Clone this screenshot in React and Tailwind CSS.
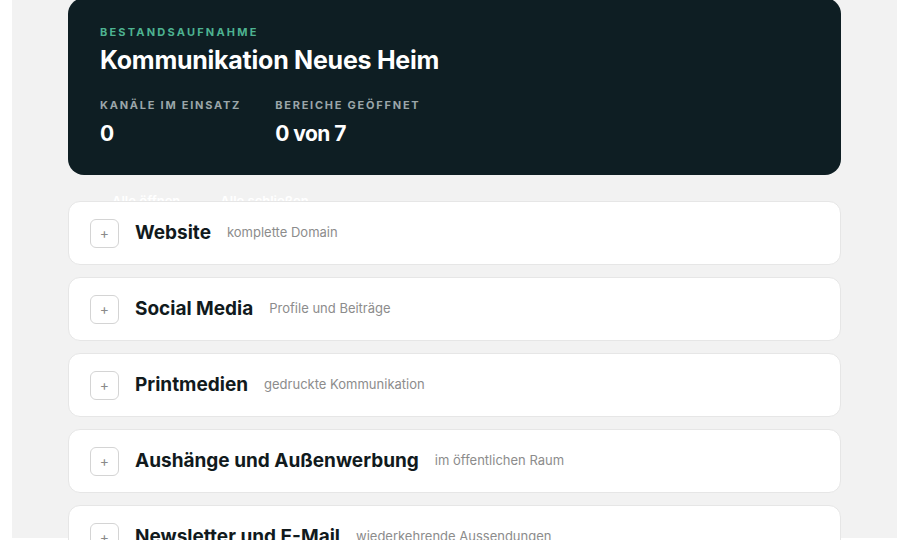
import React from 'react';

const bereiche = [
  { titel: 'Website', info: 'komplette Domain' },
  { titel: 'Social Media', info: 'Profile und Beiträge' },
  { titel: 'Printmedien', info: 'gedruckte Kommunikation' },
  { titel: 'Aushänge und Außenwerbung', info: 'im öffentlichen Raum' },
  { titel: 'Newsletter und E-Mail', info: 'wiederkehrende Aussendungen' },
  { titel: 'Veranstaltungen', info: 'Auftritte vor Ort' },
  { titel: 'Presse', info: 'Medienarbeit' },
];

export default function App() {
  return (
    <div className="h-[540px] overflow-hidden bg-white px-3" style={{ fontFamily: 'Inter, "Noto Sans", sans-serif' }}>
      <div className="h-full bg-[#f2f2f2] px-14 -mt-[2px]">
        <div className="rounded-2xl bg-[#0e1e23] px-8 pt-[29px] pb-[28px]">
          <p className="text-[11px] font-bold tracking-[0.2em] text-[#4db391] leading-none">BESTANDSAUFNAHME</p>
          <h1 className="mt-[7px] text-[25px] font-bold tracking-[-0.01em] text-white leading-[30px]">Kommunikation Neues Heim</h1>
          <div className="mt-[25px] flex gap-[34px]">
            <div>
              <p className="text-[11px] font-bold tracking-[0.16em] text-[#9ba6a9] leading-none">KANÄLE IM EINSATZ</p>
              <p className="mt-[10px] text-[21px] font-bold tracking-tight text-white leading-[26px]">0</p>
            </div>
            <div>
              <p className="text-[11px] font-bold tracking-[0.16em] text-[#9ba6a9] leading-none">BEREICHE GEÖFFNET</p>
              <p className="mt-[10px] text-[21px] font-bold tracking-tight text-white leading-[26px]">0 von 7</p>
            </div>
          </div>
        </div>

        <div className="mt-[17px] flex h-[9px] gap-10 overflow-hidden pl-[44px] text-[13px] font-semibold leading-[18px] text-white">
          <span>Alle öffnen</span>
          <span>Alle schließen</span>
        </div>

        <div className="flex flex-col gap-3">
          {bereiche.map((b) => (
            <div key={b.titel} className="flex h-16 shrink-0 items-center rounded-xl border border-[#e6e6e6] bg-white px-[21px]">
              <button className="flex h-[29px] w-[29px] items-center justify-center rounded-md border border-[#d4d4d4] text-[14px] leading-none text-[#8a8a8a]">+</button>
              <span className="ml-4 text-[19px] font-bold text-[#111a1d]">{b.titel}</span>
              <span className="ml-4 text-[13px] text-[#8c8c8c]">{b.info}</span>
            </div>
          ))}
        </div>
      </div>
    </div>
  );
}
